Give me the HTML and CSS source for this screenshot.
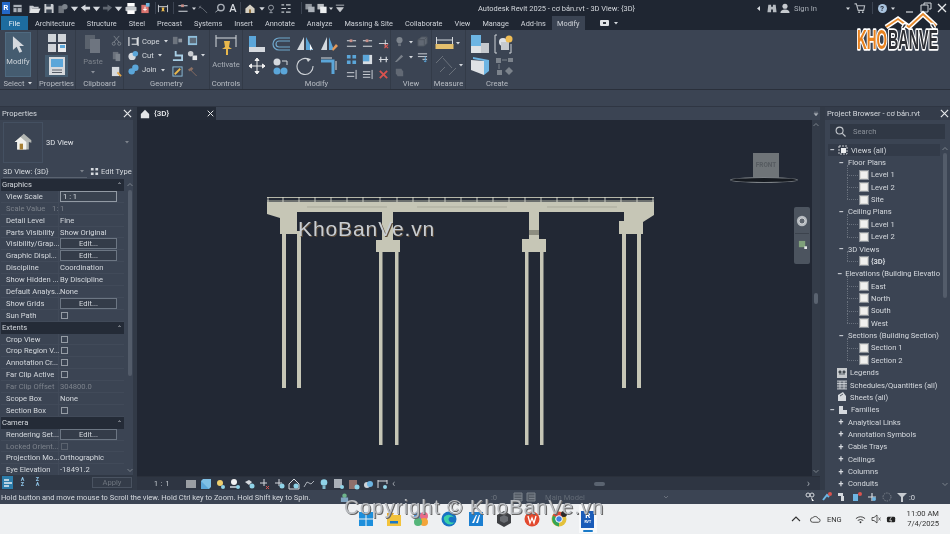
FILE: index.html
```html
<!DOCTYPE html>
<html lang="en">
<head>
<meta charset="utf-8">
<title>Autodesk Revit 2025</title>
<link rel="stylesheet" href="styles.css">
</head>
<body>
<svg class="defs" aria-hidden="true">
<defs>
<symbol id="caret" viewBox="0 0 6 6"><path d="M1 2h4L3 4.500z" fill="#d5d9de"/></symbol>
<symbol id="viewic" viewBox="0 0 10 10"><rect x=".5" y=".5" width="9" height="9" fill="#d9d9d6" stroke="#8a9097"/><rect x="2" y="2" width="6" height="6" fill="#f0f0ee"/></symbol>
<symbol id="bulb" viewBox="0 0 12 12"><circle cx="6" cy="4.500" r="3.300" fill="#8fd3e8"/><rect x="4.500" y="8" width="3" height="3" fill="#7fb7ca"/></symbol>
<symbol id="pin" viewBox="0 0 12 12"><path d="M1 2v8M11 2v8M1 4h10" stroke="#d5d9de" fill="none"/><path d="M4.500 5h3l-.5 3 1.500 1h-5l1.500-1z" fill="#e8b84c"/></symbol>
<symbol id="bars" viewBox="0 0 12 12"><path d="M1 3h4M7 3h4M1 9h10" stroke="#d5d9de" stroke-width="1.300"/><rect x="4" y="1.500" width="3" height="3" fill="#c98f88"/></symbol>
<symbol id="blue" viewBox="0 0 12 12"><rect x="1" y="1" width="10" height="10" fill="#d8dde2"/><rect x="1" y="1" width="7" height="7" fill="#5ba6d9"/></symbol>
<symbol id="chevup" viewBox="0 0 6 6"><path d="M.5 4L3 1.500 5.500 4" fill="none" stroke="#8b929b" stroke-width=".8"/></symbol>
<symbol id="chevdn" viewBox="0 0 6 6"><path d="M.5 2L3 4.500 5.500 2" fill="none" stroke="#8b929b" stroke-width=".8"/></symbol>
</defs>
</svg>

<div class="app">
  <header class="titlebar">
    <div class="qa">
      <span class="rlogo">R</span>
      <svg class="q w12 ml2" viewBox="0 0 12 12"><rect x="1" y="2" width="9" height="8" fill="#aab0b8"/><path d="M1 5h9M5 5v5" stroke="#20262f"/></svg>
      <svg class="q w15 ml3" viewBox="0 0 15 12"><path d="M2 3h4l1 1h5v2H5l-2 5H2z" fill="#c4c8cd"/><path d="M4 6h10l-2 5H2z" fill="#e1e3e5"/></svg>
      <svg class="q w14" viewBox="0 0 14 12"><path d="M2 1h9l1 1v9H2z" fill="#c9ccd0"/><rect x="4" y="1" width="5" height="3" fill="#3a4350"/><rect x="4" y="7" width="6" height="4" fill="#3a4350"/></svg>
      <svg class="q w12 ml1" viewBox="0 0 12 12"><rect x="1" y="3" width="6" height="8" fill="#6e747c"/><circle cx="8" cy="4" r="3" fill="#7c838b"/></svg>
      <svg class="q w11" viewBox="0 0 6 6"><use href="#caret"/></svg>
      <svg class="q w11" viewBox="0 0 12 12"><path d="M1 5l5-3.500V4h5v3H6v2.500z" fill="#d5d9de"/></svg>
      <svg class="q w11" viewBox="0 0 6 6"><use href="#caret"/></svg>
      <svg class="q w11" viewBox="0 0 12 12"><path d="M11 5L6 1.500V4H1v3h5v2.500z" fill="#5f6670"/></svg>
      <svg class="q w11" viewBox="0 0 6 6"><use href="#caret"/></svg>
      <svg class="q w14" viewBox="0 0 14 12"><rect x="3" y="0" width="8" height="4" fill="#fff"/><rect x="1" y="4" width="12" height="5" rx="1" fill="#c5c9cd"/><rect x="3" y="8" width="8" height="4" fill="#fff"/></svg>
      <svg class="q w14" viewBox="0 0 12 12"><rect x="2" y="2" width="8" height="9" fill="#d9726d"/><rect x="7" y="0" width="4" height="4" fill="#6db5de"/><path d="M6 4v5M4 7h4" stroke="#fff"/></svg>
      <i class="qsep ml3"></i>
      <svg class="q w16" viewBox="0 0 12 12"><use href="#pin"/></svg>
      <i class="qsep ml2"></i>
      <svg class="q w16 ml1" viewBox="0 0 12 12"><use href="#bars"/></svg>
      <svg class="q w6" viewBox="0 0 6 6"><use href="#caret"/></svg>
      <svg class="q w13" viewBox="0 0 12 12"><path d="M1 4l4 2 5 5M1 6l2-3" stroke="#6a7079" fill="none"/></svg>
      <svg class="q w16 ml2" viewBox="0 0 12 12"><circle cx="7" cy="5" r="3.500" fill="none" stroke="#aab0b8" stroke-width="1.500"/><path d="M1 10l4-3" stroke="#aab0b8"/></svg>
      <span class="qa-a">A</span>
      <i class="qsep ml3"></i>
      <svg class="q w16 ml2" viewBox="0 0 12 12"><path d="M1 6l5-4.500L11 6v5H1z" fill="#d5d0c4"/><rect x="5" y="7" width="2" height="4" fill="#8b6a35"/></svg>
      <svg class="q w8" viewBox="0 0 6 6"><use href="#caret"/></svg>
      <svg class="q w10" viewBox="0 0 12 12"><circle cx="6" cy="5" r="3" fill="none" stroke="#aab0b8"/><path d="M6 8v3M4 11h4" stroke="#aab0b8"/></svg>
      <svg class="q w16 ml2" viewBox="0 0 12 12"><path d="M1 2h3M6 2h5M1 6h5M8 6h3M1 10h3M6 10h5" stroke="#c2c7cc" stroke-width="1.300"/></svg>
      <i class="qsep ml7"></i>
      <svg class="q w12 ml2" viewBox="0 0 12 12"><rect x="1" y="1" width="7" height="6" fill="#8e949c"/><rect x="4" y="4" width="7" height="6" fill="#aab0b8"/></svg>
      <svg class="q w12" viewBox="0 0 12 12"><rect x="1" y="1" width="7" height="6" fill="#b9bdc2"/><rect x="4" y="4" width="7" height="7" fill="#eceef0"/></svg>
      <svg class="q w6" viewBox="0 0 6 6"><use href="#caret"/></svg>
      <svg class="q w10 ml1" viewBox="0 0 6 6"><path d="M.5 1h5M1 2.500h4L3 5z" stroke="#c6cacf" stroke-width=".5" fill="#c6cacf"/></svg>
    </div>
    <div class="doc-title">Autodesk Revit 2025 - cơ bản.rvt - 3D View: {3D}</div>
    <div class="account">
      <svg class="q w6" viewBox="0 0 6 6"><path d="M4 .5v5L1 3z" fill="#d5d9de"/></svg>
      <svg class="q w14 bin" viewBox="0 0 12 12"><path d="M2 2h3v8H1zM7 2h3l1 8H7zM5 4h2v3H5z" fill="#b6bbc1"/></svg>
      <svg class="q w14 user" viewBox="0 0 12 12"><circle cx="6" cy="3.500" r="2.800" fill="#c6cacf"/><path d="M1 11q0-4 5-4t5 4z" fill="#c6cacf"/></svg>
      <span class="sign">Sign In</span>
      <svg class="q w6 sg" viewBox="0 0 6 6"><use href="#caret"/></svg>
      <svg class="q w12" viewBox="0 0 12 12"><path d="M0 1h2l2 7h6l1-5H3" stroke="#b6bbc1" fill="none" stroke-width="1.200"/><circle cx="5" cy="10" r="1" fill="#b6bbc1"/><circle cx="9" cy="10" r="1" fill="#b6bbc1"/></svg>
      <i class="qsep acc"></i>
      <span class="help">?</span>
      <svg class="q w6 cr" viewBox="0 0 6 6"><use href="#caret"/></svg>
      <span class="wctl">
        <svg class="w12" viewBox="0 0 12 12"><path d="M2 10h7" stroke="#d5d9de" stroke-width="1.200"/></svg>
        <svg class="w12" viewBox="0 0 12 12"><path d="M4 3V1h7v6H9M1 3h7v7H1z" fill="none" stroke="#d5d9de"/></svg>
        <svg class="w12" viewBox="0 0 12 12"><path d="M2 2l8 8M10 2l-8 8" stroke="#e6e8ea" stroke-width="1.300"/></svg>
      </span>
    </div>
  </header>

  <nav class="tabs">
    <span class="tab file">File</span>
    <span class="tab">Architecture</span>
    <span class="tab">Structure</span>
    <span class="tab">Steel</span>
    <span class="tab">Precast</span>
    <span class="tab">Systems</span>
    <span class="tab">Insert</span>
    <span class="tab">Annotate</span>
    <span class="tab">Analyze</span>
    <span class="tab">Massing &amp; Site</span>
    <span class="tab">Collaborate</span>
    <span class="tab">View</span>
    <span class="tab">Manage</span>
    <span class="tab">Add-Ins</span>
    <span class="tab active">Modify</span>
    <span class="tab-extra">
      <svg class="w12" viewBox="0 0 12 12"><rect x="1" y="3" width="9" height="6" rx="1" fill="#dfe2e5"/><rect x="4" y="5" width="3" height="2" fill="#30363f"/></svg>
      <svg class="w6" viewBox="0 0 6 6"><use href="#caret"/></svg>
    </span>
  </nav>

  <section class="ribbon">
    <div class="rp p-select">
      <div class="rb">
        <div class="modify-btn">
          <svg class="mod-arrow" viewBox="0 0 14 20"><path d="M1 1v15l4-3.500 3 6.500 3-1.500-3-6h5z" fill="#d5d9de"/></svg>
          <span>Modify</span>
        </div>
      </div>
      <div class="rt">Select <svg class="w6" viewBox="0 0 6 6"><use href="#caret"/></svg></div>
    </div>

    <div class="rp p-props">
      <div class="rb col-c">
        <svg class="ic20" viewBox="0 0 20 20"><path d="M1 1h8v8H1zM11 1h8v8h-8zM1 11h8v8H1z" fill="#cfd3d8"/><rect x="11" y="11" width="8" height="8" fill="#e8eaec"/><rect x="13" y="12" width="5" height="3" fill="#5ba6d9"/></svg>
        <div class="prop-sel"><svg class="ic20" viewBox="0 0 20 20"><rect x="2" y="1" width="16" height="18" fill="#d6d9dd"/><rect x="4" y="3" width="12" height="8" fill="#5ba6d9"/><path d="M5 14h10M5 16.500h10" stroke="#555c66"/></svg></div>
      </div>
      <div class="rt">Properties</div>
    </div>

    <div class="rp p-clip">
      <div class="rb row">
        <div class="paste">
          <svg class="ic20" viewBox="0 0 20 20"><path d="M2 1h10v14H2z" fill="#5a626d"/><path d="M7 5h10v14H7z" fill="#6e7580"/></svg>
          <span class="dim">Paste</span>
          <svg class="w6" viewBox="0 0 6 6"><path d="M1 2h4L3 4.500z" fill="#8b919a"/></svg>
        </div>
        <div class="stack">
          <svg class="ic12" viewBox="0 0 12 12"><path d="M3 1l6 7M9 1L3 8" stroke="#7c838c"/><circle cx="3" cy="9.500" r="1.700" fill="none" stroke="#7c838c"/><circle cx="9" cy="9.500" r="1.700" fill="none" stroke="#7c838c"/></svg>
          <svg class="ic12" viewBox="0 0 12 12"><path d="M2 1h6v8H2z" fill="#6a717b"/><path d="M5 3h5v8H5z" fill="#7c838c"/></svg>
          <svg class="ic12" viewBox="0 0 12 12"><rect x="1" y="1" width="8" height="10" fill="#d5d9de"/><path d="M7 7l4 4" stroke="#e3a545" stroke-width="2"/></svg>
        </div>
      </div>
      <div class="rt">Clipboard</div>
    </div>

    <div class="rp p-geo">
      <div class="rb row">
        <div class="stack geo-names">
          <div class="gi"><svg class="ic12" viewBox="0 0 12 12"><path d="M1 1v10M11 1v10M4 3h6v6H4" stroke="#dfe2e5" stroke-width="1.300" fill="none"/></svg><span>Cope</span><svg class="w6" viewBox="0 0 6 6"><use href="#caret"/></svg></div>
          <div class="gi"><svg class="ic12" viewBox="0 0 12 12"><circle cx="4.500" cy="7" r="4" fill="#d5d9de"/><circle cx="8" cy="4" r="3" fill="#5ba6d9"/></svg><span>Cut</span><svg class="w6" viewBox="0 0 6 6"><use href="#caret"/></svg></div>
          <div class="gi"><svg class="ic12" viewBox="0 0 12 12"><circle cx="4" cy="8" r="3.500" fill="#5ba6d9"/><circle cx="8" cy="4" r="3.500" fill="#5ba6d9"/></svg><span>Join</span><svg class="w6" viewBox="0 0 6 6"><use href="#caret"/></svg></div>
        </div>
        <div class="g2x3">
          <svg class="ic12" viewBox="0 0 12 12"><rect x="1" y="2" width="5" height="8" fill="#6d747e"/><rect x="7" y="4" width="4" height="4" fill="#8e949c"/></svg>
          <svg class="ic12" viewBox="0 0 12 12"><rect x="1" y="1" width="10" height="10" fill="#8fc0dd"/><rect x="3" y="3" width="7" height="6" fill="#5d6a78"/></svg>
          <svg class="ic12" viewBox="0 0 12 12"><path d="M4 1v5h7v5H1" stroke="#a9cfe6" stroke-width="2" fill="none"/></svg>
          <svg class="ic12" viewBox="0 0 12 12"><circle cx="4" cy="4" r="3" fill="#c9ccd0"/><rect x="6" y="6" width="5" height="5" fill="#e4e6e8"/></svg>
          <svg class="ic12" viewBox="0 0 12 12"><rect x="1" y="1" width="10" height="10" fill="none" stroke="#8fc0dd"/><path d="M3 9l6-6" stroke="#e8b84c" stroke-width="2"/></svg>
          <svg class="ic12" viewBox="0 0 12 12"><path d="M1 4l4-3 2 2-2 2 6 6-1 0-6-6-1 1z" fill="#8b6f63"/></svg>
        </div>
        <svg class="w6 geo-c" viewBox="0 0 6 6"><use href="#caret"/></svg>
      </div>
      <div class="rt">Geometry</div>
    </div>

    <div class="rp p-ctrl">
      <div class="rb col-c">
        <svg class="ic22" viewBox="0 0 24 22"><path d="M2 1v12M22 1v12M2 4h20" stroke="#d5d9de" fill="none"/><path d="M10 7h6l-1 6 3 2h-4v6h-2v-6H8l3-2z" fill="#e8b84c"/></svg>
        <span class="dimmer act">Activate</span>
      </div>
      <div class="rt">Controls</div>
    </div>

    <div class="rp p-mod">
      <div class="rb modgrid">
        <svg class="ic18" viewBox="0 0 18 18"><rect x="1" y="1" width="7" height="11" fill="#5ba6d9"/><rect x="1" y="12" width="16" height="5" fill="#d5d9de"/></svg>
        <svg class="ic20x" viewBox="0 0 20 18"><path d="M19 3H8a6 6 0 0 0 0 12h11M19 6H8a3 3 0 0 0 0 6h11" fill="none" stroke="#6fa7cc" stroke-width="1.200"/></svg>
        <svg class="ic18" viewBox="0 0 18 18"><path d="M1 15L8 2v13z" fill="#d5d9de"/><path d="M10 2l7 13h-7z" fill="#5ba6d9"/><path d="M14 9l3 6-2-1-1 2z" fill="#fff"/></svg>
        <svg class="ic18" viewBox="0 0 18 18"><path d="M1 15L7 2v13z" fill="#d5d9de"/><path d="M9 2l5 13H9z" fill="#5ba6d9"/><path d="M12 14l4-5 2 2-5 5z" fill="#e59a5a"/></svg>
        <div class="m3x3">
          <svg class="ic12" viewBox="0 0 12 12"><use href="#bars"/></svg>
          <svg class="ic12" viewBox="0 0 12 12"><use href="#bars"/></svg>
          <svg class="ic12" viewBox="0 0 12 12"><path d="M1 6h10M8 2v8" stroke="#d5d9de"/><path d="M7 7l4 4M11 7l-4 4" stroke="#d9534f" stroke-width="1.300"/></svg>
          <svg class="ic12" viewBox="0 0 12 12"><path d="M1 1h4v4H1zM7 1h4v4H7zM1 7h4v4H1zM7 7h4v4H7z" fill="#5ba6d9"/></svg>
          <svg class="ic12" viewBox="0 0 12 12"><use href="#blue"/></svg>
          <svg class="ic12" viewBox="0 0 12 12"><path d="M1 6h10M3 3v6M9 3v6" stroke="#d5d9de" stroke-width="1.300"/></svg>
          <svg class="ic12" viewBox="0 0 12 12"><path d="M11 1v10M1 4h8M1 8h8" stroke="#d5d9de"/></svg>
          <svg class="ic12" viewBox="0 0 12 12"><path d="M11 1v10M1 3h8M1 6h8M1 9h8" stroke="#d5d9de"/></svg>
          <svg class="ic12" viewBox="0 0 12 12"><path d="M2 2l8 8M10 2l-8 8" stroke="#d9534f" stroke-width="2"/></svg>
        </div>
        <svg class="ic18" viewBox="0 0 18 18"><path d="M9 1v16M1 9h16M9 1L7 3.500h4zM9 17l-2-2.500h4zM1 9l2.500-2v4zM17 9l-2.500-2v4z" stroke="#f0f0f0" fill="#f0f0f0"/></svg>
        <svg class="ic20x" viewBox="0 0 20 18"><circle cx="6" cy="5" r="3.500" fill="#d5d9de"/><circle cx="6" cy="14" r="3.500" fill="#5ba6d9"/><circle cx="13" cy="14" r="3.500" fill="#5ba6d9"/><path d="M11 4h5v4" stroke="#d5d9de" fill="none"/></svg>
        <svg class="ic18" viewBox="0 0 18 18"><path d="M13 2.500A8 8 0 1 0 17 9" fill="none" stroke="#cfd3d8" stroke-width="1.100"/><path d="M10 1l5 1-3 3z" fill="#cfd3d8"/></svg>
        <svg class="ic18" viewBox="0 0 18 18"><path d="M1 4h12v13" fill="none" stroke="#5ba6d9" stroke-width="3"/><path d="M1 1h11M16 4v9" stroke="#d5d9de"/></svg>
      </div>
      <div class="rt">Modify</div>
    </div>

    <div class="rp p-view">
      <div class="rb viewgrid">
        <svg class="ic12" viewBox="0 0 12 12"><circle cx="6" cy="4.500" r="3.300" fill="#7c838c"/><rect x="4.500" y="8" width="3" height="3" fill="#6a717b"/></svg>
        <svg class="w6" viewBox="0 0 6 6"><use href="#caret"/></svg>
        <svg class="ic12" viewBox="0 0 12 12"><path d="M1 4l4-3h6v7l-3 3H1zM1 4h7v7M8 4l3-3" fill="#616873" stroke="#4d545e"/></svg>
        <svg class="ic12" viewBox="0 0 12 12"><path d="M1 11l7-8 2 2-7 6z" fill="#7a818a"/></svg>
        <svg class="w6" viewBox="0 0 6 6"><use href="#caret"/></svg>
        <svg class="ic12" viewBox="0 0 12 12"><path d="M1 2h10M1 5h10M6 8h5" stroke="#d5d9de"/><path d="M9 5v6M7.500 9.500L9 11l1.500-1.500" stroke="#5ba6d9" fill="none"/></svg>
        <svg class="ic12" viewBox="0 0 12 12"><path d="M2 2h6l2 3v5H4L2 7z" fill="#626974"/></svg>
      </div>
      <div class="rt">View</div>
    </div>

    <div class="rp p-meas">
      <div class="rb measure">
        <div class="mrow">
          <svg class="ic18w" viewBox="0 0 18 14"><path d="M1 1v8M17 1v8M1 4h16" stroke="#d5d9de" fill="none"/><rect x="0" y="8" width="18" height="5" fill="#e3bf6d"/></svg>
          <svg class="w6" viewBox="0 0 6 6"><use href="#caret"/></svg>
        </div>
        <div class="mrow">
          <svg class="ic20y" viewBox="0 0 22 20"><path d="M1 8L8 1M8 3l9 10M21 13l-7 7M10 12l-5 5" stroke="#6a717b" fill="none"/></svg>
          <svg class="w6" viewBox="0 0 6 6"><use href="#caret"/></svg>
        </div>
      </div>
      <div class="rt">Measure</div>
    </div>

    <div class="rp p-create">
      <div class="rb creategrid">
        <svg class="ic20" viewBox="0 0 20 20"><rect x="1" y="1" width="10" height="11" fill="#6db5e3"/><rect x="1" y="12" width="10" height="7" fill="#dfe2e5"/><rect x="11" y="9" width="8" height="10" fill="#c5c9ce"/></svg>
        <svg class="ic20" viewBox="0 0 20 20"><path d="M3 1H1v18h2M15 19h2V10" fill="none" stroke="#cfd3d8"/><circle cx="9" cy="8" r="4" fill="#dfe2e5"/><rect x="7" y="8" width="8" height="8" fill="#c5c9ce"/><circle cx="15" cy="5" r="3.500" fill="#efbd55"/></svg>
        <svg class="ic20" viewBox="0 0 20 20"><path d="M1 4l13 1v14L1 14z" fill="#dfe2e5"/><path d="M3 1l16 3v11l-5 4V5L3 3z" fill="#6db5e3"/></svg>
        <svg class="ic20" viewBox="0 0 20 20"><path d="M2 2h5v5H2zM14 2h5v4h-5zM8 14h-5v5h5zM15 11l4 4-4 4-4-4z" fill="#7c838c"/><path d="M8 4h5M5 8v5" stroke="#7c838c"/></svg>
      </div>
      <div class="rt">Create</div>
    </div>
  </section>
  <div class="optbar"></div>

  <main class="work">
    <aside class="props">
      <div class="ptitle"><span>Properties</span><svg class="w9" viewBox="0 0 10 10"><path d="M1 1l8 8M9 1l-8 8" stroke="#e6e8ea" stroke-width="1.300"/></svg></div>
      <div class="typesel">
        <div class="typeic"><svg viewBox="0 0 24 24"><path d="M2 12L13 2l9 8v3l-3-1v9H5v-9z" fill="#b3b6b2"/><path d="M2 12l7-6 7 6v9H5v-9z" fill="#f2f2ee"/><rect x="8" y="14" width="4" height="7" fill="#a67f33"/></svg></div>
        <span class="tname">3D View</span>
        <svg class="w6 tcar" viewBox="0 0 6 6"><path d="M1 2h4L3 4.500z" fill="#7d838c"/></svg>
      </div>
      <div class="instance">
        <div class="instsel"><span>3D View: {3D}</span><svg class="w6" viewBox="0 0 6 6"><path d="M1 2h4L3 4.500z" fill="#7d838c"/></svg></div>
        <svg class="w9" viewBox="0 0 10 10"><path d="M1 1h3v3H1zM6 1h3v3H6zM1 6h3v3H1zM6 6h3v3H6z" fill="#d5d9de"/></svg>
        <span class="etype">Edit Type</span>
      </div>
      <div class="pbody">
        <div class="plist">
          <div class="phead"><span>Graphics</span><b>⌃</b></div>
          <div class="prow"><span class="k">View Scale</span><span class="v"><span class="field">1 : 1</span></span></div>
          <div class="prow off"><span class="k">Scale Value <em>1:</em></span><span class="v">1</span></div>
          <div class="prow"><span class="k">Detail Level</span><span class="v">Fine</span></div>
          <div class="prow"><span class="k">Parts Visibility</span><span class="v">Show Original</span></div>
          <div class="prow"><span class="k">Visibility/Grap...</span><span class="v"><span class="edit">Edit...</span></span></div>
          <div class="prow"><span class="k">Graphic Displ...</span><span class="v"><span class="edit">Edit...</span></span></div>
          <div class="prow"><span class="k">Discipline</span><span class="v">Coordination</span></div>
          <div class="prow"><span class="k">Show Hidden ...</span><span class="v">By Discipline</span></div>
          <div class="prow"><span class="k">Default Analys...</span><span class="v">None</span></div>
          <div class="prow"><span class="k">Show Grids</span><span class="v"><span class="edit">Edit...</span></span></div>
          <div class="prow"><span class="k">Sun Path</span><span class="v"><i class="cb"></i></span></div>
          <div class="phead"><span>Extents</span><b>⌃</b></div>
          <div class="prow"><span class="k">Crop View</span><span class="v"><i class="cb"></i></span></div>
          <div class="prow"><span class="k">Crop Region V...</span><span class="v"><i class="cb"></i></span></div>
          <div class="prow"><span class="k">Annotation Cr...</span><span class="v"><i class="cb"></i></span></div>
          <div class="prow"><span class="k">Far Clip Active</span><span class="v"><i class="cb"></i></span></div>
          <div class="prow off"><span class="k">Far Clip Offset</span><span class="v">304800.0</span></div>
          <div class="prow"><span class="k">Scope Box</span><span class="v">None</span></div>
          <div class="prow"><span class="k">Section Box</span><span class="v"><i class="cb"></i></span></div>
          <div class="phead"><span>Camera</span><b>⌃</b></div>
          <div class="prow"><span class="k">Rendering Set...</span><span class="v"><span class="edit">Edit...</span></span></div>
          <div class="prow off"><span class="k">Locked Orient...</span><span class="v"><i class="cb"></i></span></div>
          <div class="prow"><span class="k">Projection Mo...</span><span class="v">Orthographic</span></div>
          <div class="prow"><span class="k">Eye Elevation</span><span class="v">-18491.2</span></div>
        </div>
        <div class="pscroll">
          <svg class="w6" viewBox="0 0 6 6"><use href="#chevup"/></svg>
          <i class="thumb"></i>
          <svg class="w6 pdn" viewBox="0 0 6 6"><use href="#chevdn"/></svg>
        </div>
      </div>
      <div class="pfoot">
        <span class="fb on"><svg class="w10" viewBox="0 0 10 10"><path d="M1 2h5M1 5h8M1 8h5" stroke="#e4eef5" stroke-width="1.300"/></svg></span>
        <span class="fb sortic">A<br>Z</span>
        <span class="fb sortic">Z<br>A</span>
        <span class="apply">Apply</span>
      </div>
    </aside>

    <section class="center">
      <div class="vtabs">
        <div class="vtab">
          <svg class="w10" viewBox="0 0 12 12"><path d="M1 6l5-5 5 5v5H1z" fill="#e4e6e8"/></svg>
          <b>{3D}</b>
          <svg class="w7 vx" viewBox="0 0 10 10"><path d="M1 1l8 8M9 1l-8 8" stroke="#e6e8ea" stroke-width="1.400"/></svg>
        </div>
        <svg class="w6 vmenu" viewBox="0 0 6 6"><path d="M1 1.200h4M1 2.500h4L3 5z" stroke="#aab0b8" stroke-width=".4" fill="#aab0b8"/></svg>
      </div>
      <div class="cwrap">
        <div class="canvas">
          <svg class="bridge" viewBox="0 0 400 310" aria-label="Bridge elevation">
            <g fill="#c6c6b6">
              <rect x="15" y="90" width="4" height="157"/><rect x="30" y="90" width="4" height="157"/>
              <rect x="355" y="90" width="4" height="157"/><rect x="370" y="90" width="4" height="157"/>
              <rect x="112" y="108" width="3.500" height="196"/><rect x="128" y="108" width="3.500" height="196"/>
              <rect x="258" y="108" width="3.500" height="196"/><rect x="273" y="108" width="3.500" height="196"/>
              <path d="M0 61H387V74L376 81V93H352V80H357V71H30V93H13V77L0 73z"/>
              <path d="M115 70h11v30h-11z"/>
              <path d="M262 70h10v30h-10z"/>
              <rect x="109" y="99" width="24" height="12"/><rect x="255" y="98" width="24" height="13"/>
            </g>
            <path d="M0 56.500h387M0 60h387" stroke="#c6c6b6" stroke-width=".9"/>
            <path d="M1 56v5M16 56v5M32 56v5M48 56v5M64 56v5M80 56v5M96 56v5M113 56v5M130 56v5M146 56v5M162 56v5M178 56v5M194 56v5M210 56v5M226 56v5M242 56v5M258 56v5M274 56v5M290 56v5M306 56v5M322 56v5M338 56v5M354 56v5M370 56v5M386 56v5" stroke="#e4e4d8" stroke-width=".8"/>
            <path d="M40 66h80M150 66h90M280 66h70" stroke="#a9a99b" stroke-width="1"/>
            <rect x="262" y="89" width="10" height="5" fill="#8d8d80"/>
          </svg>
          <div class="vcube">
            <div class="cube">FRONT</div>
            <div class="ring"></div>
          </div>
          <div class="navbar">
            <svg class="w14" viewBox="0 0 14 14"><circle cx="7" cy="7" r="6" fill="#b6bbc0"/><circle cx="7" cy="7" r="3.500" fill="#5f666f" stroke="#d8dbdd"/></svg>
            <i class="navsep"></i>
            <svg class="w9" viewBox="0 0 10 10"><rect x="1" y="1" width="7" height="7" fill="#7fa07a"/><rect x="7" y="7" width="3" height="3" fill="#e6e8ea"/></svg>
          </div>
        </div>
        <div class="vscroll">
          <svg class="w6" viewBox="0 0 6 6"><use href="#chevup"/></svg>
          <i class="vthumb"></i>
          <svg class="w6" viewBox="0 0 6 6"><use href="#chevdn"/></svg>
        </div>
      </div>
      <div class="vbar">
        <span class="vscale">1 : 1</span>
        <svg class="w12" viewBox="0 0 12 12"><rect x="1" y="2" width="10" height="8" fill="#9a9ea3"/></svg>
        <svg class="w12" viewBox="0 0 12 12"><rect x="1" y="3" width="8" height="8" fill="#5ba6d9"/><path d="M1 3l2-2h8v8l-2 2" fill="#7fc0e6"/></svg>
        <svg class="w12" viewBox="0 0 12 12"><circle cx="6" cy="5" r="3" fill="#efcf6e"/><circle cx="9" cy="9" r="2" fill="#8fd3e8"/></svg>
        <svg class="w12" viewBox="0 0 12 12"><circle cx="5" cy="4" r="3" fill="#f2f2f2"/><rect x="1" y="8" width="7" height="2" fill="#aab0b8"/><circle cx="9" cy="9" r="2" fill="#8fd3e8"/></svg>
        <svg class="w12" viewBox="0 0 12 12"><path d="M1 4l4-2 3 2-3 3z" fill="#d5d9de"/><circle cx="8" cy="8" r="2.500" fill="#8fd3e8"/></svg>
        <svg class="w12" viewBox="0 0 12 12"><path d="M1 5h7M5 1v7" stroke="#d5d9de"/><path d="M7 8l3 3M10 8l-3 3" stroke="#d9534f"/></svg>
        <svg class="w12" viewBox="0 0 12 12"><path d="M1 5h7M5 1v7" stroke="#d5d9de"/><circle cx="8" cy="8" r="2.500" fill="#8fd3e8"/></svg>
        <svg class="w12" viewBox="0 0 12 12"><path d="M1 6l5-5 5 5v5H1z" fill="none" stroke="#d5d9de"/><circle cx="8" cy="8" r="2.500" fill="#8fd3e8"/></svg>
        <svg class="w12" viewBox="0 0 12 12"><path d="M1 9l3-5 4 2 3-3" stroke="#aab0b8" fill="none"/></svg>
        <svg class="w12" viewBox="0 0 12 12"><use href="#bulb"/></svg>
        <svg class="w12" viewBox="0 0 12 12"><rect x="1" y="1" width="8" height="9" fill="#aab0b8"/><circle cx="9" cy="9" r="2" fill="#8fd3e8"/></svg>
        <svg class="w12" viewBox="0 0 12 12"><path d="M1 2h8v9H1z" fill="#8e6f6a"/><circle cx="9" cy="9" r="2.500" fill="#8fd3e8"/></svg>
        <svg class="w12" viewBox="0 0 12 12"><circle cx="5" cy="7" r="3" fill="#cfd3d8"/><circle cx="8" cy="6" r="3" fill="#6db5e3"/></svg>
        <svg class="w12" viewBox="0 0 12 12"><path d="M1 2v8M10 2v4M1 3h9" stroke="#d5d9de" fill="none"/><circle cx="8" cy="9" r="2" fill="#8fd3e8"/></svg>
        <span class="vchev">‹</span>
        <i class="hthumb"></i>
        <span class="vchev end">›</span>
      </div>
    </section>

    <aside class="browser">
      <div class="ptitle"><span>Project Browser - cơ bản.rvt</span><svg class="w9" viewBox="0 0 10 10"><path d="M1 1l8 8M9 1l-8 8" stroke="#e6e8ea" stroke-width="1.300"/></svg></div>
      <div class="search"><svg class="w11" viewBox="0 0 12 12"><circle cx="5" cy="5" r="3.800" fill="none" stroke="#c3c7cc" stroke-width="1.200"/><path d="M8 8l3.500 3.500" stroke="#c3c7cc" stroke-width="1.300"/></svg><span>Search</span></div>
      <div class="tbody">
        <ul class="tree">
          <li class="l0 sel"><i class="tg">−</i><svg class="nodeic" viewBox="0 0 10 10"><rect x="1" y="1" width="8" height="8" fill="none" stroke="#c9ccd0" stroke-dasharray="2 1"/><rect x="3" y="3" width="5" height="5" fill="#eceef0"/></svg>Views (all)</li>
          <li class="l1"><i class="tg">−</i>Floor Plans</li>
          <li class="l2"><svg class="leaf" viewBox="0 0 10 10"><use href="#viewic"/></svg>Level 1</li>
          <li class="l2"><svg class="leaf" viewBox="0 0 10 10"><use href="#viewic"/></svg>Level 2</li>
          <li class="l2"><svg class="leaf" viewBox="0 0 10 10"><use href="#viewic"/></svg>Site</li>
          <li class="l1"><i class="tg">−</i>Ceiling Plans</li>
          <li class="l2"><svg class="leaf" viewBox="0 0 10 10"><use href="#viewic"/></svg>Level 1</li>
          <li class="l2"><svg class="leaf" viewBox="0 0 10 10"><use href="#viewic"/></svg>Level 2</li>
          <li class="l1"><i class="tg">−</i>3D Views</li>
          <li class="l2 cur"><svg class="leaf" viewBox="0 0 10 10"><use href="#viewic"/></svg>{3D}</li>
          <li class="l1"><i class="tg">−</i>Elevations (Building Elevatio</li>
          <li class="l2"><svg class="leaf" viewBox="0 0 10 10"><use href="#viewic"/></svg>East</li>
          <li class="l2"><svg class="leaf" viewBox="0 0 10 10"><use href="#viewic"/></svg>North</li>
          <li class="l2"><svg class="leaf" viewBox="0 0 10 10"><use href="#viewic"/></svg>South</li>
          <li class="l2"><svg class="leaf" viewBox="0 0 10 10"><use href="#viewic"/></svg>West</li>
          <li class="l1"><i class="tg">−</i>Sections (Building Section)</li>
          <li class="l2"><svg class="leaf" viewBox="0 0 10 10"><use href="#viewic"/></svg>Section 1</li>
          <li class="l2"><svg class="leaf" viewBox="0 0 10 10"><use href="#viewic"/></svg>Section 2</li>
          <li class="l0b"><svg class="nodeic" viewBox="0 0 10 10"><rect x="0" y="0" width="10" height="10" fill="#c7cacd"/><path d="M2 3h2v2H2zM6 3h2v2H6zM2 6h6" stroke="#596069"/></svg>Legends</li>
          <li class="l0b"><svg class="nodeic" viewBox="0 0 10 10"><path d="M0 1h10v8H0z" fill="#6a717b"/><path d="M0 1h10M0 3.500h10M0 6h10M0 9h10M3 1v8M7 1v8" stroke="#d5d9de" stroke-width=".8"/></svg>Schedules/Quantities (all)</li>
          <li class="l0b"><svg class="nodeic" viewBox="0 0 10 10"><path d="M1 3l5-3 3 4v5H1z" fill="#d5d9de"/><path d="M3 4l3-2" stroke="#596069"/></svg>Sheets (all)</li>
          <li class="l0"><i class="tg">−</i><svg class="nodeic" viewBox="0 0 10 10"><path d="M1 1h4v4h4v4H1z" fill="#d5d9de"/></svg>Families</li>
          <li class="l1"><i class="tg">+</i>Analytical Links</li>
          <li class="l1"><i class="tg">+</i>Annotation Symbols</li>
          <li class="l1"><i class="tg">+</i>Cable Trays</li>
          <li class="l1"><i class="tg">+</i>Ceilings</li>
          <li class="l1"><i class="tg">+</i>Columns</li>
          <li class="l1"><i class="tg">+</i>Conduits</li>
        </ul>
        <div class="tscroll">
          <svg class="w6" viewBox="0 0 6 6"><use href="#chevup"/></svg>
          <i class="tthumb"></i>
          <svg class="w6 tdn" viewBox="0 0 6 6"><use href="#chevdn"/></svg>
        </div>
      </div>
    </aside>
  </main>

  <footer class="status">
    <span class="stext">Hold button and move mouse to Scroll the view. Hold Ctrl key to Zoom. Hold Shift key to Spin.</span>
    <svg class="w9 s-work" viewBox="0 0 10 10"><circle cx="5" cy="3" r="2.500" fill="#6db38a"/><rect x="1" y="5" width="8" height="5" fill="#7fa4c0"/></svg>
    <span class="s-zero">:0</span>
    <svg class="w10" viewBox="0 0 10 10"><path d="M1 1h8v8H1zM1 4h8M1 6.500h8" fill="#555c66" stroke="#7a818a"/></svg>
    <svg class="w10" viewBox="0 0 10 10"><path d="M1 1h8v8H1zM3 4h6M3 6.500h6" fill="#555c66" stroke="#7a818a"/></svg>
    <span class="s-model">Main Model</span>
    <svg class="w6 s-drop" viewBox="0 0 6 6"><path d="M1 2l2 2 2-2" fill="none" stroke="#7c838c" stroke-width=".7"/></svg>
    <span class="s-right">
      <svg class="w10" viewBox="0 0 10 10"><circle cx="3" cy="3" r="2" fill="none" stroke="#d5d9de"/><circle cx="7" cy="3" r="2" fill="none" stroke="#d5d9de"/><path d="M6 5l3 4-2 0z" fill="#fff"/></svg>
      <svg class="w10 gap" viewBox="0 0 10 10"><path d="M1 8l4-5 2 2" stroke="#6db5e3" stroke-width="2" fill="none"/><circle cx="8" cy="2" r="2" fill="#d9534f"/></svg>
      <svg class="w10" viewBox="0 0 10 10"><path d="M1 1h5v3H1zM4 4h3v5H4z" fill="#d5d9de"/></svg>
      <svg class="w10" viewBox="0 0 10 10"><path d="M1 2h5v7H1z" fill="#6db5e3"/><circle cx="8" cy="2" r="2" fill="#d9534f"/></svg>
      <svg class="w10" viewBox="0 0 10 10"><path d="M5 1v8M1 5h8" stroke="#d5d9de" stroke-width="1.200"/><circle cx="7" cy="7" r="2" fill="#6db5e3"/></svg>
      <svg class="w10" viewBox="0 0 10 10"><circle cx="5" cy="5" r="4" fill="none" stroke="#7c838c" stroke-dasharray="1.500 1"/></svg>
      <svg class="w10" viewBox="0 0 10 10"><path d="M0 1h10L6 5v5H4V5z" fill="#c6cacf"/></svg>
      <span class="s-f">:0</span>
    </span>
  </footer>

  <div class="taskbar">
    <div class="tk-icons">
      <svg class="tk" viewBox="0 0 16 16"><path d="M1 1h6.500v6.500H1zM8.500 1H15v6.500H8.500zM1 8.500h6.500V15H1zM8.500 8.500H15V15H8.500z" fill="#1d8fdc"/></svg>
      <svg class="tk" viewBox="0 0 16 16"><path d="M1 4h14v11H1z" fill="#f3c33c"/><path d="M1 4h6l1-2H1z" fill="#e5a82c"/><rect x="4" y="10" width="8" height="2.500" fill="#1a79c9"/></svg>
      <svg class="tk" viewBox="0 0 16 16"><circle cx="5" cy="5" r="4" fill="#4a8ed8"/><circle cx="11" cy="5" r="4" fill="#e76b8a"/><circle cx="11" cy="11" r="4" fill="#f3a53a"/><circle cx="5" cy="11" r="4" fill="#55b57a"/></svg>
      <svg class="tk" viewBox="0 0 16 16"><circle cx="8" cy="8" r="7.500" fill="#1773c4"/><path d="M3 6q5-5 11 1-3-2-5-1-3 2 0 5 3 1 5 0-5 5-10 0-2-3-1-5z" fill="#3bd0a8"/></svg>
      <svg class="tk" viewBox="0 0 16 16"><rect x="1" y="1" width="14" height="14" fill="#1b7fd1"/><path d="M4 12L8 4h1l-3 8zM8 12l3-8h1l-2 8z" fill="#fff"/></svg>
      <svg class="tk" viewBox="0 0 16 16"><path d="M8 0l7 4v8l-7 4-7-4V4z" fill="#3e4044"/><path d="M8 4l4 2v4l-4 2-4-2V6z" fill="#6a6d72"/></svg>
      <svg class="tk" viewBox="0 0 16 16"><circle cx="8" cy="8" r="7.500" fill="#e2492f"/><path d="M4 5l2 7 2-5 2 5 2-7" fill="none" stroke="#fff" stroke-width="1.300"/></svg>
      <svg class="tk" viewBox="0 0 16 16"><circle cx="8" cy="8" r="7.500" fill="#e3c13b"/><path d="M8 8L1.500 4.500A7.500 7.500 0 0 1 14.500 4.500z" fill="#d9493b"/><path d="M8 8L2 4.500A7.500 7.500 0 0 0 8 15.500z" fill="#34a456"/><circle cx="8" cy="8" r="3.300" fill="#3e82e6" stroke="#fff"/><circle cx="13" cy="3" r="3" fill="#2b2b2b"/></svg>
      <span class="tk-r"><span class="tk-rv">R<small>RVT</small></span><i class="tk-bar"></i></span>
    </div>
    <div class="tray">
      <svg class="w10" viewBox="0 0 10 10"><path d="M1 7l4-4 4 4" fill="none" stroke="#333" stroke-width="1.100"/></svg>
      <svg class="w11 t-cloud" viewBox="0 0 12 10"><path d="M3 8a2.500 2.500 0 0 1 0-5 3.500 3.500 0 0 1 6 1 2 2 0 0 1 0 4z" fill="none" stroke="#444"/></svg>
      <span class="eng">ENG</span>
      <svg class="w11" viewBox="0 0 12 10"><path d="M1 4q5-4 10 0M3 6q3-2 6 0" fill="none" stroke="#333"/><circle cx="6" cy="8" r="1" fill="#333"/></svg>
      <svg class="w10" viewBox="0 0 10 10"><path d="M1 3.500h2L6 1v8L3 6.500H1z" fill="none" stroke="#333" stroke-width=".8"/><path d="M7.500 3.500l2 3M9.500 3.500l-2 3" stroke="#333" stroke-width=".6"/></svg>
      <svg class="w11" viewBox="0 0 12 10"><rect x="1" y="2" width="9" height="6" rx="1.500" fill="#222"/><path d="M6 2L4 6h2l-1 3" stroke="#fff" fill="none" stroke-width=".7"/></svg>
      <div class="clock"><span>11:00 AM</span><span>7/4/2025</span></div>
    </div>
  </div>

  <svg class="khologo" viewBox="0 0 84 40" aria-label="KhoBanVe logo">
    <path d="M30 16L42 8 53 16 67 3 80 15" fill="none" stroke="#fff" stroke-width="5"/>
    <path d="M30 16L42 8 53 16 67 3 80 15" fill="none" stroke="#e68a2e" stroke-width="1.800"/>
    <text class="lg lg-o" x="1" y="38" textLength="30" lengthAdjust="spacingAndGlyphs">KHO</text>
    <text class="lg lg-d" x="32" y="38" textLength="50" lengthAdjust="spacingAndGlyphs">BÁNVÈ</text>
  </svg>
  <div class="wm wm1">KhoBanVe.vn</div>
  <div class="wm wm2">Copyright © KhoBanVe.vn</div>
</div>
</body>
</html>
```

FILE: styles.css
```css
*{box-sizing:border-box;margin:0;padding:0}
html,body{width:950px;height:534px;overflow:hidden;background:#eef0f2}
body{font-family:"Roboto","Liberation Sans",sans-serif;font-size:7.6px;color:#dfe2e6}
.defs{position:absolute;width:0;height:0}
svg{display:block;flex:none}
i{font-style:normal}
.app{position:relative;width:950px;height:534px;display:flex;flex-direction:column;overflow:hidden;filter:blur(.28px)}
.w6{width:6px;height:6px}.w7{width:7px;height:7px}.w8{width:8px;height:8px}.w9{width:9px;height:9px}.w10{width:10px;height:10px}.w11{width:11px;height:11px}.w12{width:12px;height:12px}.w13{width:13px;height:12px}.w14{width:14px;height:12px}.w15{width:15px;height:12px}.w16{width:16px;height:12px}.w17{width:17px;height:12px}.w18{width:18px;height:12px}
.ic12{width:11px;height:11px}.ic18{width:18px;height:18px}.ic20{width:20px;height:20px}.ic20x{width:20px;height:18px}.ic22{width:24px;height:22px}.ic18w{width:19px;height:14px}.ic20y{width:22px;height:20px}
.ml1{margin-left:1px}.ml2{margin-left:2px}.ml3{margin-left:3px}.ml7{margin-left:7px}

.titlebar{height:16px;background:#1f2632;display:flex;align-items:center;flex:none;position:relative}
.qa{display:flex;align-items:center;width:345px;padding-left:2px}
.rlogo{width:12px;height:12px;background:#2468c8;color:#fff;font-weight:700;font-size:8px;line-height:12px;text-align:center}
.q{height:11px}
.qsep{width:1px;height:12px;background:#3c4452}
.qa-a{width:12px;font-size:11px;font-weight:500;text-align:center;color:#d5d9de;margin-left:1px}
.doc-title{width:311px;padding-left:133px;font-size:7.45px;white-space:nowrap;color:#d5d9de}
.account{display:flex;align-items:center;margin-left:auto;padding-right:2px;width:194px;justify-content:flex-end}
.account .bin{margin-left:3px}
.account .user{margin-left:-1px}
.account .sign{width:51px;margin-left:2px;color:#a8aeb6}
.account .sg{margin-right:3px}
.qsep.acc{margin:0 5px 0 6px}
.help{width:9px;height:9px;border-radius:50%;background:#a9c3de;color:#1f2632;font-weight:700;font-size:7.5px;line-height:9px;text-align:center}
.account .cr{margin:0 8px 0 3.5px}
.wctl{display:flex;gap:4px}
.tabs{height:14px;background:#1f2632;display:flex;align-items:stretch;flex:none;font-size:7.35px;padding-left:1px;color:#cfd3d9}
.tab{display:flex;align-items:center;padding:0 6px;white-space:nowrap}
.tab.file{width:27px;justify-content:center;background:#1d6c9f;color:#e8f0f6;margin-right:1px;padding:0}
.tab.active{background:#3b4453;width:33px;justify-content:center;padding:0}
.tab-extra{display:flex;align-items:center;gap:2px;margin-left:14px}

.ribbon{height:60px;background:#3b4453;display:flex;flex:none;border-bottom:1px solid #2a303b;color:#d5d9de}
.rp{display:flex;flex-direction:column;border-right:1px solid #333b48}
.rb{height:47px;flex:none}
.rt{flex:1;display:flex;align-items:center;justify-content:center;gap:3px;color:#b8bdc4}
.row{display:flex}
.col-c{display:flex;flex-direction:column;align-items:center}
.p-select{width:38px}
.p-select .rb{padding:2px 0 0 5px}
.modify-btn{width:26px;height:45px;background:#455c70;border:1px solid #4f6a80;display:flex;flex-direction:column;align-items:center;color:#cdd4da}
.mod-arrow{width:13px;height:19px;margin:2px 0 3px 0}
.p-props{width:38px}
.p-props .rb{padding-top:3px}
.prop-sel{width:23px;height:22px;margin-top:2px;background:#455c70;display:flex;align-items:center;justify-content:center}
.p-clip{width:48px}
.paste{width:34px;display:flex;flex-direction:column;align-items:center;padding:4px 0 0 0;margin-right:0}
.paste span{margin-top:3px;margin-bottom:3px}
.dim{color:#7d838c}
.dimmer{color:#aab0b8}
.stack{display:flex;flex-direction:column;gap:4.5px;padding:5px 0 0 1px}
.p-geo{width:86px}
.p-geo .rb{padding-left:3px}
.geo-names{width:45px;padding-left:1px;gap:0;padding-top:4px}
.gi{height:15px;display:flex;align-items:center;gap:3px;color:#d5d9de}
.g2x3{display:grid;grid-template-columns:15px 11px;gap:4px 0;padding-top:5px}
.geo-c{margin:22px 0 0 2px}
.p-ctrl{width:33px}
.p-ctrl .rb{padding-top:4px}
.act{margin-top:4px}
.p-mod{width:148px}
.modgrid{display:grid;grid-template-columns:23px 25px 24px 25px 50px;grid-template-rows:22px 22px;padding:5px 0 0 5px;align-items:start}
.m3x3{grid-column:5;grid-row:1/3;display:grid;grid-template-columns:16px 16px 11px;row-gap:4.5px;padding-top:3px;padding-left:1px}
.modgrid>svg:nth-of-type(5){grid-column:1;grid-row:2}
.modgrid>svg:nth-of-type(6){grid-column:2;grid-row:2}
.modgrid>svg:nth-of-type(7){grid-column:3;grid-row:2}
.modgrid>svg:nth-of-type(8){grid-column:4;grid-row:2}
.p-view{width:41px}
.viewgrid{display:grid;grid-template-columns:13px 10px 12px;grid-auto-rows:15.5px;padding:4px 0 0 2px;align-items:center;align-content:start;justify-items:center}
.p-meas{width:34px}
.measure{padding:6px 0 0 3px;display:flex;flex-direction:column;gap:5px}
.mrow{display:flex;align-items:center;gap:1px}
.p-create{width:62px;border-right:0}
.creategrid{display:grid;grid-template-columns:24px 20px;grid-template-rows:22px 20px;padding:4px 0 0 4px}
.optbar{height:17px;background:#3b4453;flex:none;border-bottom:1px solid #2f3643}

.work{flex:1;min-height:0;display:flex;background:#323a47}
.props{width:133px;background:#3b4453;display:flex;flex-direction:column;flex:none}
.ptitle{height:13px;display:flex;align-items:center;justify-content:space-between;padding:0 1px 0 2px;background:#343c4a;flex:none;color:#d5d9de}
.typesel{height:44px;display:flex;align-items:center;padding-left:3px;flex:none}
.typeic{width:40px;height:41px;border:1px solid #445061;display:flex;align-items:center;justify-content:center;margin-right:3px}
.typeic svg{width:20px;height:20px}
.tname{flex:1}
.tcar{margin-right:3px}
.instance{height:15px;display:flex;align-items:center;padding-left:3px;gap:3px;flex:none;color:#d5d9de}
.instsel{width:84px;display:flex;justify-content:space-between;align-items:center;padding-right:2px;height:12px;border-bottom:1px solid #5a6370}
.etype{white-space:nowrap;margin-left:-1px}
.pbody{flex:1;min-height:0;display:flex;overflow:hidden}
.plist{width:127px;padding-left:1px}
.phead{height:11.9px;background:#242b37;display:flex;justify-content:space-between;align-items:center;padding:0 2px 0 1px;width:123px;color:#d5d9de}
.phead b{font-size:6px;line-height:6px;color:#d5d9de;font-weight:400}
.prow{height:11.9px;display:flex;width:123px;border-bottom:1px solid #414a59}
.prow .k{width:58px;padding-left:5px;white-space:nowrap;line-height:11px;color:#d5d9de;border-right:1px solid #414a59}
.prow .k em{font-style:normal;margin-left:5px}
.prow .v{flex:1;padding-left:1px;line-height:11px;white-space:nowrap;display:flex;align-items:center;color:#d5d9de}
.prow.off .k,.prow.off .v{color:#7d838c}
.prow.off .cb{border-color:#5a626e}
.field{width:57px;height:11px;border:1px solid #929aa4;padding-left:2px;line-height:9px;background:#39424f}
.edit{width:57px;height:11px;border:1px solid #6c7683;background:#343c49;line-height:9px;text-align:center}
.cb{width:7px;height:7px;border:1px solid #949ba4;margin-left:1px;display:block}
.pscroll{width:6px;display:flex;flex-direction:column;align-items:center;padding-top:3px;height:296px}
.thumb{display:block;width:4px;height:186px;background:#535c6a;border-radius:2px;margin-top:2px}
.pdn{margin-top:auto;margin-bottom:2px}
.pfoot{height:15px;display:flex;align-items:center;gap:2px;padding-left:2px;background:#303845;flex:none}
.fb{width:11px;height:13px;display:flex;align-items:center;justify-content:center}
.fb.on{background:#2c7ca9}
.sortic{font-size:5.4px;line-height:5.4px;text-align:center;color:#8fc4e6;font-weight:700;margin-left:2px;display:block;padding-top:1px}
.apply{margin-left:auto;margin-right:1px;width:40px;height:11px;border:1px solid #4a5361;text-align:center;line-height:9px;color:#6e757f;background:#343c49}

.center{flex:1;min-width:0;margin:0 5px 0 4px;display:flex;flex-direction:column;background:#2b323e}
.vtabs{height:13px;display:flex;background:#3b4453;flex:none;justify-content:space-between;align-items:center;padding-right:1px}
.vtab{width:79px;height:13px;padding-left:3px;display:flex;align-items:center;background:#242b37;gap:4px;font-size:8px}
.vtab b{font-weight:500;color:#eceef0}
.vx{margin-left:auto;margin-right:2px}
.cwrap{flex:1;min-height:0;display:flex}
.canvas{flex:1;background:#222834;position:relative;overflow:hidden}
.vscroll{width:8px;background:#343c49;display:flex;flex-direction:column;align-items:center;justify-content:space-between;padding:2px 0}
.vthumb{width:4px;height:11px;background:#5a6370;border-radius:2px}
.bridge{position:absolute;left:130px;top:21px;width:400px;height:310px}
.vcube{position:absolute;left:593px;top:33px;width:70px}
.cube{width:26px;height:25px;margin-left:23px;background:#6f7478;color:#565b60;font-size:6.4px;font-weight:700;text-align:center;line-height:25px}
.ring{width:68px;height:6px;border:1px solid #7d8287;border-radius:50%;background:#15191f;margin-top:-1px}
.navbar{position:absolute;left:657px;top:87px;width:16px;height:57px;background:#4c545f;border-radius:2px;display:flex;flex-direction:column;align-items:center;padding-top:8px;gap:6px}
.navsep{width:14px;height:1px;background:#3c434d}
.vbar{height:14px;background:#2e3542;display:flex;align-items:center;flex:none;gap:2.8px;padding-left:1px;color:#cfd3d8;border-top:1px solid #2a303b}
.vscale{width:44px;padding-left:16px;font-size:7px;letter-spacing:.6px}
.vchev{font-size:11px;line-height:11px;color:#9aa0a8}
.hthumb{width:11px;height:4px;background:#5a6370;border-radius:2px;margin-left:196px}
.vchev.end{margin-left:auto;margin-right:10px}

.browser{width:125px;background:#3b4453;display:flex;flex-direction:column;flex:none}
.search{height:15px;margin:4px 5px 5px 5px;padding-left:5px;display:flex;align-items:center;gap:7px;background:#303845;color:#8a9099;flex:none}
.tbody{flex:1;min-height:0;display:flex;overflow:hidden}
.tree{list-style:none;width:115px;overflow:hidden;padding-left:3px}
.tree li{height:12.37px;display:flex;align-items:center;white-space:nowrap;position:relative;color:#d5d9de}
.tg{width:8px;font-size:9px;font-weight:700;text-align:center;line-height:10px}
.sel{background:#333b49}
.nodeic{width:10px;height:10px;margin-right:3px}
.l0 .tg{margin-right:2px}
.l0b{padding-left:9px}
.l1{padding-left:9px}
.l1 .tg{margin-right:3px}
.l2{padding-left:31px}
.leaf{width:10px;height:10px;margin-right:2px}
.l2::before{content:"";position:absolute;left:19px;top:6px;width:11px;border-top:1px dotted #69717d}
.l2::after{content:"";position:absolute;left:19px;top:-4px;height:10px;border-left:1px dotted #69717d}
.cur{font-weight:700}
.tscroll{flex:1;display:flex;flex-direction:column;align-items:center;padding-top:2px}
.tthumb{display:block;width:4px;height:145px;background:#535c6a;border-radius:2px;margin-top:1px}
.tdn{margin-top:auto;margin-bottom:3px}

.status{height:14px;background:#3b4453;flex:none;display:flex;align-items:center;padding-left:1px;color:#d5d9de}
.stext{width:339px;white-space:nowrap;font-size:7.5px}
.s-work{margin-right:142px}
.s-zero{width:22px;color:#6e757f}
.status>svg.w10{margin-right:3px}
.s-model{margin-left:6px;width:118px;color:#626a75}
.s-right{display:flex;align-items:center;gap:5px;margin-left:136px}
.s-right .gap{margin-left:2px}
.s-f{margin-left:-3px}

.taskbar{height:30px;background:#eef0f2;flex:none;display:flex;align-items:center;position:relative;color:#333}
.tk-icons{display:flex;align-items:center;gap:11.6px;padding-left:358px;width:600px}
.tk{width:16px;height:16px}
.tk-r{position:relative;width:18px;height:28px;background:#f8f9fa;display:flex;align-items:center;justify-content:center}
.tk-rv{width:13px;height:17px;background:#1a5bb8;color:#fff;font-size:8px;font-weight:700;line-height:9px;text-align:center;display:block}
.tk-rv small{display:block;font-size:3.5px;line-height:5px;color:#fff}
.tk-bar{position:absolute;bottom:1px;left:4px;width:10px;height:2px;background:#1a7ac8;border-radius:1px}
.tray{position:absolute;left:791px;top:0;height:30px;display:flex;align-items:center;gap:5px}
.t-cloud{margin-left:4px}
.eng{width:20px;margin:0 3px 0 1px;font-size:7.5px;white-space:nowrap}
.clock{display:flex;flex-direction:column;align-items:flex-end;font-size:7.6px;line-height:10px;margin-left:4px;width:33px;color:#333;white-space:nowrap}

.khologo{position:absolute;left:856px;top:11px;width:84px;height:40px;overflow:visible}
.lg{font-family:"Liberation Sans",sans-serif;font-weight:700;font-size:27px;stroke:#fff;stroke-width:3.5px;paint-order:stroke;stroke-linejoin:round}
.lg-o{fill:#e8821f}
.lg-d{fill:#2d2f35}
.wm{position:absolute;font-family:"Liberation Sans",sans-serif;color:#c8cdd2;text-shadow:1px 1px 0 #5a4a38;white-space:nowrap}
.wm1{left:298px;top:217px;font-size:21px;letter-spacing:.9px}
.wm2{left:344px;top:495px;font-size:20.5px;letter-spacing:.95px;color:#b9bcc0;text-shadow:1px 1px 0 #666}
```
